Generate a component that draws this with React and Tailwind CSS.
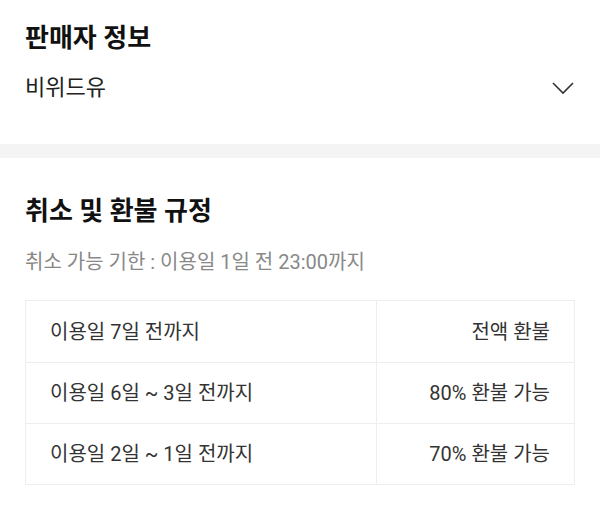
const font = { fontFamily: 'Roboto, "Noto Sans CJK KR", sans-serif' }

const rules = [
  { when: '이용일 7일 전까지', refund: '전액 환불' },
  { when: '이용일 6일 ~ 3일 전까지', refund: '80% 환불 가능' },
  { when: '이용일 2일 ~ 1일 전까지', refund: '70% 환불 가능' },
]

export default function App() {
  return (
    <div className="w-[600px] h-[520px] bg-white overflow-hidden text-[#222]" style={font}>
      <section className="px-[25px] pt-[20px] pb-[40px]">
        <h2 className="text-[26px] leading-[36px] font-bold text-[#111]">판매자 정보</h2>
        <div className="mt-[16px] flex items-center justify-between">
          <span className="text-[22px] leading-[32px] text-[#222]">비위드유</span>
          <svg width="22" height="13" viewBox="0 0 22 13" fill="none" className="mr-[1px]">
            <polyline points="1,1 11,11 21,1" stroke="#333" strokeWidth="1.6" />
          </svg>
        </div>
      </section>
      <div className="h-[14px] bg-[#f4f4f4]" />
      <section className="px-[25px] pt-[35px]">
        <h2 className="text-[26px] leading-[36px] font-bold text-[#111]">취소 및 환불 규정</h2>
        <p className="mt-[18px] text-[20px] leading-[30px] text-[#888]">취소 가능 기한 : 이용일 1일 전 23:00까지</p>
        <div className="mt-[23px] border border-[#eeeeee]">
          {rules.map((r, i) => (
            <div key={r.when} className={`flex h-[61px] ${i > 0 ? 'border-t border-[#eeeeee]' : ''}`}>
              <div className="w-[351px] flex items-center pl-[24px] border-r border-[#eeeeee] text-[20px] text-[#333]">{r.when}</div>
              <div className="flex-1 flex items-center justify-end pr-[24px] text-[20px] text-[#333]">{r.refund}</div>
            </div>
          ))}
        </div>
      </section>
    </div>
  )
}
